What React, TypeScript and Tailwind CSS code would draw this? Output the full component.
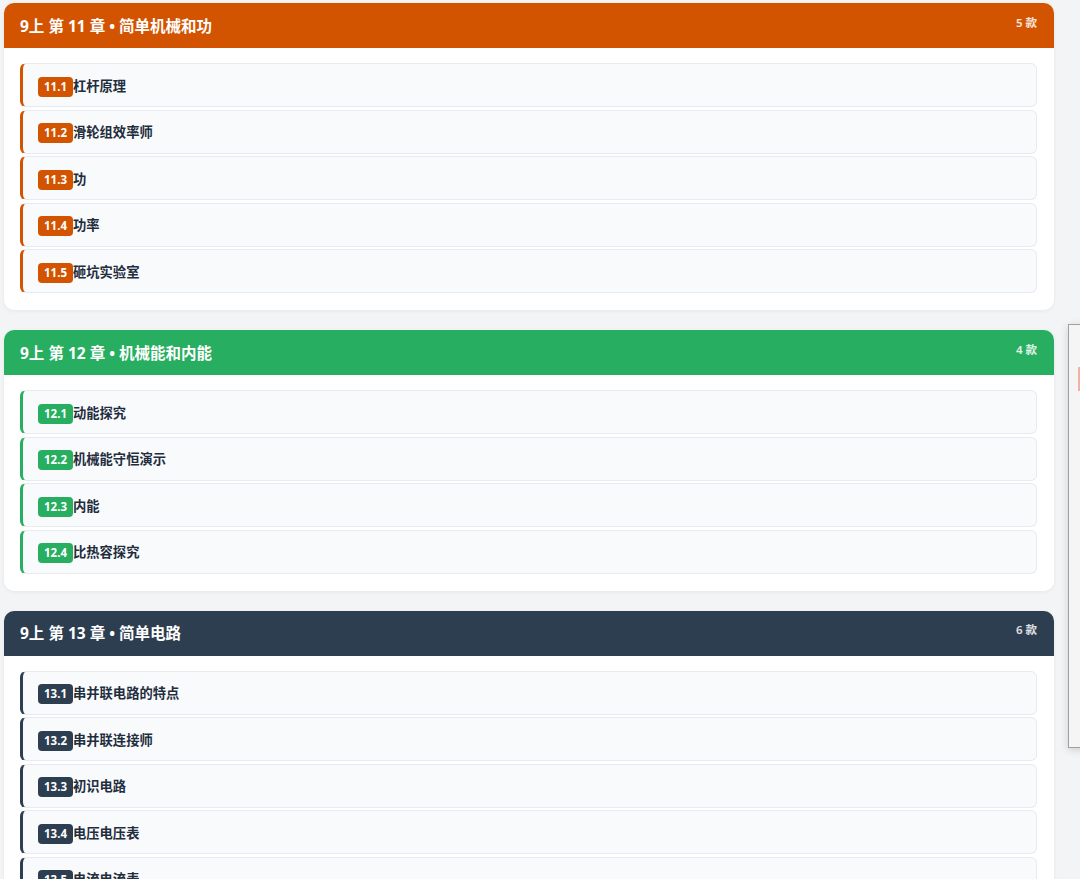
import React from 'react';

interface Lesson {
  code: string;
  title: string;
}

interface Chapter {
  title: string;
  tone: 'orange' | 'green' | 'slate';
  lessons: Lesson[];
}

const chapters: Chapter[] = [
  {
    title: '9上 第 11 章 • 简单机械和功',
    tone: 'orange',
    lessons: [
      { code: '11.1', title: '杠杆原理' },
      { code: '11.2', title: '滑轮组效率师' },
      { code: '11.3', title: '功' },
      { code: '11.4', title: '功率' },
      { code: '11.5', title: '砸坑实验室' },
    ],
  },
  {
    title: '9上 第 12 章 • 机械能和内能',
    tone: 'green',
    lessons: [
      { code: '12.1', title: '动能探究' },
      { code: '12.2', title: '机械能守恒演示' },
      { code: '12.3', title: '内能' },
      { code: '12.4', title: '比热容探究' },
    ],
  },
  {
    title: '9上 第 13 章 • 简单电路',
    tone: 'slate',
    lessons: [
      { code: '13.1', title: '串并联电路的特点' },
      { code: '13.2', title: '串并联连接师' },
      { code: '13.3', title: '初识电路' },
      { code: '13.4', title: '电压电压表' },
      { code: '13.5', title: '电流电流表' },
      { code: '13.6', title: '欧姆定律' },
    ],
  },
];

const toneClasses = {
  orange: { head: 'bg-[#d35400]', border: 'border-l-[#d35400]', badge: 'bg-[#d35400]' },
  green: { head: 'bg-[#27ae60]', border: 'border-l-[#27ae60]', badge: 'bg-[#27ae60]' },
  slate: { head: 'bg-[#2c3e50]', border: 'border-l-[#2c3e50]', badge: 'bg-[#2c3e50]' },
};

const ChapterCard = ({ chapter }: { chapter: Chapter }) => {
  const tone = toneClasses[chapter.tone];
  return (
    <section className="w-[1050px] bg-white rounded-[10px] shadow-[0_1px_4px_rgba(0,0,0,0.06)] overflow-hidden">
      <header className={`${tone.head} h-[45px] flex items-center justify-between pl-4 pr-[17px]`}>
        <h2 className="text-white text-[15.5px] font-bold leading-none pt-[2px]">{chapter.title}</h2>
        <span className="text-white/85 text-[11.5px] font-semibold leading-none -mt-[6px]">
          {chapter.lessons.length} 款
        </span>
      </header>
      <ul className="flex flex-col gap-[2.5px] pl-4 pr-[17px] pt-[15px] pb-[17px]">
        {chapter.lessons.map((l) => (
          <li
            key={l.code}
            className={`h-[44px] flex items-center pl-[15px] pt-[3px] bg-[#f8fafc] border border-[#e6ebf1] border-l-[3px] ${tone.border} rounded-[6px]`}
          >
            <span
              className={`${tone.badge} text-white text-[11.5px] font-bold leading-none rounded-[4px] px-[6px] h-[20px] flex items-center`}
            >
              {l.code}
            </span>
            <span className="text-[#1f2d3d] text-[13.3px] font-bold leading-none">{l.title}</span>
          </li>
        ))}
      </ul>
    </section>
  );
};

export default function App() {
  return (
    <div
      className="relative h-[879px] overflow-hidden bg-[#f3f4f6] pt-[3px] pl-[4px]"
      style={{ fontFamily: '"Noto Sans", "Noto Sans CJK SC", sans-serif' }}
    >
      <div className="flex flex-col gap-[20px]">
        {chapters.map((c) => (
          <ChapterCard key={c.title} chapter={c} />
        ))}
      </div>
      {/* side drawer peeking in from the right */}
      <div className="absolute left-[1068px] top-[324px] w-[40px] h-[424px] bg-[#f5f5f5] border border-[#a0a0a0] shadow-[0_2px_8px_rgba(0,0,0,0.15)]">
        <div className="absolute left-[9px] top-[42px] w-[4px] h-[24px] bg-[#f3b0a6]" />
      </div>
    </div>
  );
}
